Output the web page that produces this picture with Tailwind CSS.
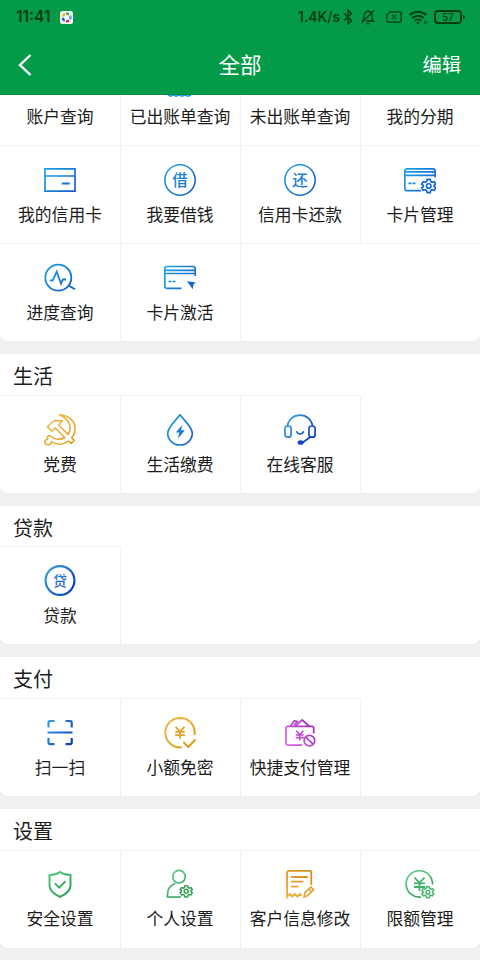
<!DOCTYPE html>
<html lang="zh-CN">
<head>
  <meta charset="UTF-8">
  <meta name="viewport" content="width=device-width, initial-scale=1.0">
  <title>全部</title>
  <script src="https://cdn.jsdelivr.net/npm/@tailwindcss/browser@4"></script>
</head>
<body class="bg-[#f0f0f0] font-['Noto_Sans_CJK_SC',sans-serif] text-[#1c1c1c]">

<!-- Shared gradients and symbols -->
<svg class="absolute w-0 h-0" aria-hidden="true">
  <defs>
    <linearGradient id="blue" gradientUnits="userSpaceOnUse" x1="0" y1="4" x2="32" y2="28"><stop offset="0" stop-color="#1ba6e0"/><stop offset="1" stop-color="#1458cf"/></linearGradient>
    <linearGradient id="deep" gradientUnits="userSpaceOnUse" x1="2" y1="6" x2="30" y2="26"><stop offset="0" stop-color="#35a0e0"/><stop offset="1" stop-color="#0a35bd"/></linearGradient>
    <linearGradient id="gold" gradientUnits="userSpaceOnUse" x1="0" y1="0" x2="24" y2="32"><stop offset="0" stop-color="#f3bd4c"/><stop offset="1" stop-color="#e39a1c"/></linearGradient>
    <linearGradient id="amber" gradientUnits="userSpaceOnUse" x1="2" y1="30" x2="24" y2="2"><stop offset="0" stop-color="#f0b23c"/><stop offset="1" stop-color="#d98a1c"/></linearGradient>
    <linearGradient id="purple" gradientUnits="userSpaceOnUse" x1="2" y1="28" x2="30" y2="6"><stop offset="0" stop-color="#dc6bea"/><stop offset="1" stop-color="#9a27b5"/></linearGradient>
    <linearGradient id="green" gradientUnits="userSpaceOnUse" x1="6" y1="2" x2="24" y2="30"><stop offset="0" stop-color="#5ccb84"/><stop offset="1" stop-color="#229746"/></linearGradient>
    <symbol id="gear" viewBox="-8 -8 16 16" overflow="visible">
      <path d="M-1.6-7h3.2l.6 2.2 1.5.9 2.2-.6 1.6 2.7L5.900-.8v1.6l1.600 1-1.600 2.700-2.200-.6-1.500.9L1.600 7h-3.200l-.6-2.200-1.500-.9-2.200.6-1.600-2.700 1.600-1v-1.600l-1.600-1 1.600-2.700 2.200.6 1.500-.9z"/>
      <circle r="2.400"/>
    </symbol>
    <symbol id="yen" viewBox="-8 -8 16 16" overflow="visible">
      <path d="M-5-6.500 0-1l5-5.500M-5.500-.6h11M-5.500 3h11M0-1v8"/>
    </symbol>
  </defs>
</svg>

<!-- Header -->
<header class="h-[95px] bg-[#039b47] border-b border-[#0b8c42]">
  <div class="h-[34px] pl-4 pr-[15px] flex items-center text-[#083b16] font-['Inter',sans-serif]">
    <span class="w-[37px] text-[15.500px] font-semibold whitespace-nowrap">11:41</span>
    <svg class="w-[13px] h-[13px] ml-[7px]" viewBox="0 0 13 13" fill="none" stroke-width="2.400">
      <rect width="13" height="13" rx="2.500" fill="#f4faf6"/>
      <path d="M2.800 5.500A4 4 0 0 1 5 2.800" stroke="#f0b323"/>
      <path d="M6 2.700A4 4 0 0 1 9 3.500" stroke="#39a854"/>
      <path d="M10 4.500A4 4 0 0 1 10 8.500" stroke="#5aa6e0"/>
      <path d="M9 9.500A4 4 0 0 1 6 10.300" stroke="#d7263d"/>
      <path d="M4.700 9.800A4 4 0 0 1 2.800 6.800" stroke="#2a55c8"/>
    </svg>
    <span class="ml-auto text-[13.800px] font-semibold whitespace-nowrap">1.4K/s</span>
    <svg class="w-[10px] h-4 ml-[3px]" viewBox="0 0 10 16" fill="none" stroke="currentColor" stroke-width="1.400"><path d="M1 4.500 8.500 11.500 5 15V1l3.500 3.500L1 11.500"/></svg>
    <svg class="w-4 h-4 ml-[7px]" viewBox="0 0 16 16" fill="none" stroke="currentColor" stroke-width="1.300"><path d="M4 11V7a4 4 0 0 1 4-4.500c2.500 0 4 2 4 4.500v3l1.500 2H6M8 1v1.500M6.500 14.500h3M1.500 14 14 1.500M3.500 12h-1l1.500-2"/></svg>
    <svg class="w-4 h-3 ml-[10px]" viewBox="0 0 16 12" fill="none" stroke="currentColor" stroke-width="1.300"><path d="M4 .8h9.500a1.600 1.600 0 0 1 1.700 1.600v7.200a1.600 1.600 0 0 1-1.700 1.600h-11A1.600 1.600 0 0 1 .8 9.600V4zM6 3.900l4.200 4.200M10.200 3.900 6 8.100"/></svg>
    <svg class="w-[19px] h-[15px] ml-[7px]" viewBox="0 0 19 15" fill="none" stroke="currentColor" stroke-width="2"><path d="M.8 5a12 12 0 0 1 16.400 0M3.300 8a8.200 8.200 0 0 1 11.400 0M5.800 10.700a4.800 4.800 0 0 1 6.400 0"/><circle cx="9" cy="13" r="1.200" fill="currentColor" stroke="none"/><circle cx="16.500" cy="12.500" r="1.300" stroke-width=".8"/></svg>
    <div class="ml-[6px] w-[28px] h-[14px] rounded-[4px] border-2 border-current flex items-center justify-center text-[10px] font-medium leading-none">57</div>
    <div class="ml-px w-[2px] h-1 rounded-r bg-[#083b16]"></div>
  </div>
  <div class="h-[60px] grid grid-cols-3 items-center text-white">
    <svg class="ml-[18px] mt-px w-[14px] h-[22px]" viewBox="0 0 14 22" fill="none" stroke="currentColor" stroke-width="2.400"><path d="M12.500 1 2 11l10.500 10"/></svg>
    <h1 class="text-center text-[21.500px] leading-none">全部</h1>
    <span class="text-right pt-[2px] pr-[19px] text-[19.300px] leading-none">编辑</span>
  </div>
</header>

<!-- Cells overlap by one pixel so that each divider falls on the column boundary -->
<main class="text-[16.800px] leading-[24px] text-center">

  <!-- Credit card -->
  <section class="bg-white rounded-b-lg overflow-hidden">
    <div class="grid grid-cols-4 h-[50px]">
      <div class="-mr-px border-r border-[#f2f2f2] pt-[9px]">账户查询</div>
      <div class="relative -mr-px border-r border-[#f2f2f2] pt-[9px]">
        <!-- bottom edge of the icon scrolled under the header -->
        <svg class="absolute top-0 left-[48px] w-6 h-[2px]" viewBox="0 0 24 2" fill="none" stroke="#1b9be0" stroke-width="1.500"><path d="M0 0 2.500 1.200 5 0 8 1.200l3-1.200L14 1.200l3-1.200L20 1.200l3-1.200"/></svg>
        已出账单查询
      </div>
      <div class="-mr-px border-r border-[#f2f2f2] pt-[9px]">未出账单查询</div>
      <div class="pt-[9px]">我的分期</div>
    </div>
    <div class="grid grid-cols-4 auto-rows-[98px]">
      <div class="-mr-px border-t border-r border-[#f2f2f2] pt-[18px] flex flex-col items-center gap-[6px]">
        <svg class="w-8 h-8 shrink-0" viewBox="0 0 32 32" fill="none" stroke="url(#blue)" stroke-width="1.700"><path d="M1 4.800h30v22.400H1zM1 12h30"/><path d="M17.700 19.500h8" stroke-width="2"/></svg>
        <span>我的信用卡</span>
      </div>
      <div class="-mr-px border-t border-r border-[#f2f2f2] pt-[18px] flex flex-col items-center gap-[6px]">
        <svg class="w-8 h-8 shrink-0" viewBox="0 0 32 32" fill="none"><circle cx="16" cy="16" r="15.200" stroke="url(#blue)" stroke-width="1.600"/><text x="16" y="21.800" text-anchor="middle" font-size="15.500" font-weight="500" fill="url(#blue)">借</text></svg>
        <span>我要借钱</span>
      </div>
      <div class="-mr-px border-t border-r border-[#f2f2f2] pt-[18px] flex flex-col items-center gap-[6px]">
        <svg class="w-8 h-8 shrink-0" viewBox="0 0 32 32" fill="none"><circle cx="16" cy="16" r="15.200" stroke="url(#blue)" stroke-width="1.600"/><text x="16" y="21.800" text-anchor="middle" font-size="15.500" font-weight="500" fill="url(#blue)">还</text></svg>
        <span>信用卡还款</span>
      </div>
      <div class="border-t border-[#f2f2f2] pt-[18px] flex flex-col items-center gap-[6px]">
        <svg class="w-8 h-8 shrink-0" viewBox="0 0 32 32" fill="none" stroke="url(#blue)" stroke-width="1.700"><path d="M31.200 13.500V7a2.200 2.200 0 0 0-2.200-2.200H3A2.200 2.200 0 0 0 .8 7v17.500A2.200 2.200 0 0 0 3 26.700h14M1 7.800h30M1 11.300h30M4.500 19.300h3M8.500 19.300h3"/><g transform="translate(24.700 22)"><use href="#gear" x="-7.500" y="-7.500" width="15" height="15" stroke="#1769d2" stroke-width="1.800"/></g></svg>
        <span>卡片管理</span>
      </div>
      <div class="-mr-px border-t border-r border-[#f2f2f2] pt-[18px] flex flex-col items-center gap-[6px]">
        <svg class="w-8 h-8 shrink-0" viewBox="0 0 32 32" fill="none" stroke="url(#blue)" stroke-width="1.800"><circle cx="14.300" cy="15.700" r="13"/><path d="M24.500 23.500 31 27.300M5.800 18.300h3l3.900-8.600 4.300 12 1.900-4.200H22"/></svg>
        <span>进度查询</span>
      </div>
      <div class="-mr-px border-t border-r border-[#f2f2f2] pt-[18px] flex flex-col items-center gap-[6px]">
        <svg class="w-8 h-8 shrink-0" viewBox="0 0 32 32" fill="none" stroke="url(#blue)" stroke-width="1.700"><path d="M31.200 14V6.700A2.200 2.200 0 0 0 29 4.500H3A2.200 2.200 0 0 0 .8 6.700v17.500A2.200 2.200 0 0 0 3 26.400h14.500M1 8.300h30M1 11.500h30M4.500 19.500h3M8.500 19.500h3"/><path d="m23 19.300 9 1.200-2.500 1.800-.7 4.900z" fill="#1260d4" stroke="none"/></svg>
        <span>卡片激活</span>
      </div>
      <div class="border-t border-[#f2f2f2] col-span-2"></div>
    </div>
  </section>

  <!-- Life -->
  <section class="mt-[13px] bg-white rounded-b-lg overflow-hidden">
    <h2 class="h-[40.700px] pl-[13px] text-left text-[20px] leading-[43px]">生活</h2>
    <div class="grid grid-cols-4 h-[98px]">
      <div class="-mr-px border-t border-r border-[#f2f2f2] pt-[18px] flex flex-col items-center gap-[6px]">
        <svg class="w-8 h-8 shrink-0" viewBox="0 0 32 32" fill="none" stroke="url(#gold)" stroke-width="1.500" stroke-linejoin="round"><path d="M15.500.8C25 1.500 31 7 31 14.500c0 4-1.300 7-3.300 9.300l2.500 2.700-3 3-2.700-2.500c-5.500 4-12 4-17 .5-.3 2.300-1.500 3.300-3 3.300C2 30.800.8 29.500.8 28S2 25.500 3.800 25.200c-.8-1.200-.6-2.200.2-3l1.800-.7c5 4.300 10.700 4.700 15 2L11.300 14l-3.600 3.300-4.200-4.500L10.300 6.500l8 .3-3.500 4.200 9.200 9.500C28.500 14.500 26 5.500 15.500.8z"/></svg>
        <span>党费</span>
      </div>
      <div class="-mr-px border-t border-r border-[#f2f2f2] pt-[18px] flex flex-col items-center gap-[6px]">
        <svg class="w-8 h-8 shrink-0" viewBox="0 0 32 32" fill="none" stroke="url(#blue)" stroke-width="1.700"><path d="M16 .8C12 6 3.700 13.300 3.700 19.300a12.300 11.700 0 0 0 24.600 0C28.300 13.300 20 6 16 .8z"/><path d="m18.300 10.800-6.600 7.800h3.600l-1.200 5.900 6.700-8.300h-3.700z" fill="url(#blue)" stroke="none"/></svg>
        <span>生活缴费</span>
      </div>
      <div class="-mr-px border-t border-r border-[#f2f2f2] pt-[18px] flex flex-col items-center gap-[6px]">
        <svg class="w-8 h-8 shrink-0" viewBox="0 0 32 32" fill="none" stroke="url(#deep)" stroke-width="1.700" stroke-linecap="round"><path d="M3.300 12C4.500 5.300 9.500 1.200 16 1.200S27.500 5.300 28.700 12"/><rect x=".9" y="12" width="6.200" height="11.200" rx="2.800"/><rect x="24.900" y="12" width="6.200" height="11.200" rx="2.800"/><path d="M12.800 17.800c1.300 3 5.300 3 6.600 0M26 23.200l-7 5"/><ellipse cx="16.700" cy="28.500" rx="2.200" ry="1.500" fill="#1747c6" stroke="#1747c6"/></svg>
        <span>在线客服</span>
      </div>
    </div>
  </section>

  <!-- Loans -->
  <section class="mt-[13px] bg-white rounded-b-lg overflow-hidden">
    <h2 class="h-[40.700px] pl-[13px] text-left text-[20px] leading-[43px]">贷款</h2>
    <div class="grid grid-cols-4 h-[98px]">
      <div class="-mr-px border-t border-r border-[#f2f2f2] pt-[18px] flex flex-col items-center gap-[6px]">
        <svg class="w-8 h-8 shrink-0" viewBox="0 0 32 32" fill="none"><circle cx="16" cy="15.500" r="14.400" stroke="url(#deep)" stroke-width="2.200"/><text x="16" y="20.800" text-anchor="middle" font-size="14" font-weight="500" fill="url(#deep)">贷</text></svg>
        <span>贷款</span>
      </div>
    </div>
  </section>

  <!-- Payments -->
  <section class="mt-[13px] bg-white rounded-b-lg overflow-hidden">
    <h2 class="h-[40.700px] pl-[13px] text-left text-[20px] leading-[43px]">支付</h2>
    <div class="grid grid-cols-4 h-[98px]">
      <div class="-mr-px border-t border-r border-[#f2f2f2] pt-[18px] flex flex-col items-center gap-[6px]">
        <svg class="w-8 h-8 shrink-0" viewBox="0 0 32 32" fill="none" stroke="url(#deep)" stroke-width="2.200"><path d="M4.500 10.500V5.500a1.500 1.500 0 0 1 1.500-1.500h4.500M21.500 4h4.700a1.500 1.500 0 0 1 1.500 1.500v5M27.700 21v4.700a1.500 1.500 0 0 1-1.500 1.500h-4.700M10.500 27.200H6a1.500 1.500 0 0 1-1.500-1.500V21M3.500 15.500h25"/></svg>
        <span>扫一扫</span>
      </div>
      <div class="-mr-px border-t border-r border-[#f2f2f2] pt-[18px] flex flex-col items-center gap-[6px]">
        <svg class="w-8 h-8 shrink-0" viewBox="0 0 32 32" fill="none" stroke="url(#gold)" stroke-width="2"><path d="M17.700 30.200A14.700 14.700 0 1 1 30.500 18M19.300 25l5 5 7.200-7.500"/><use href="#yen" x="9" y="8.500" width="14" height="14" stroke="#e5a02c"/></svg>
        <span>小额免密</span>
      </div>
      <div class="-mr-px border-t border-r border-[#f2f2f2] pt-[18px] flex flex-col items-center gap-[6px]">
        <svg class="w-8 h-8 shrink-0" viewBox="0 0 32 32" fill="none" stroke="url(#purple)" stroke-width="1.700"><path d="M29.700 16.500V11A1.800 1.800 0 0 0 28 9.300H3.700A1.800 1.800 0 0 0 2 11v15.500a1.800 1.800 0 0 0 1.700 1.700H18M6.500 9l3.800-5.300 3.700 1M11.500 9l6.700-6.200L25 9M10 8l4-4"/><circle cx="25.400" cy="23.700" r="5.300"/><path d="m21.800 20.200 7.200 7"/><use href="#yen" x="10" y="12.700" width="11.500" height="11.500" stroke="#c04ad2" stroke-width="2.200"/></svg>
        <span>快捷支付管理</span>
      </div>
    </div>
  </section>

  <!-- Settings -->
  <section class="mt-[13px] bg-white rounded-b-lg overflow-hidden">
    <h2 class="h-[40.700px] pl-[13px] text-left text-[20px] leading-[43px]">设置</h2>
    <div class="grid grid-cols-4 h-[98px]">
      <div class="-mr-px border-t border-r border-[#f2f2f2] pt-[18px] flex flex-col items-center gap-[5px]">
        <svg class="w-8 h-8 shrink-0" viewBox="0 0 32 32" fill="none" stroke="url(#green)" stroke-width="2"><path d="M16 3c3.200 2.200 6.500 3 10.500 3v10.500c0 5-4.500 8.700-10.500 11.300C10 25.200 5.500 21.500 5.500 16.500V6C9.500 6 12.800 5.200 16 3zM10.800 14.300l4.400 4.300 6.400-6.500"/></svg>
        <span>安全设置</span>
      </div>
      <div class="-mr-px border-t border-r border-[#f2f2f2] pt-[18px] flex flex-col items-center gap-[5px]">
        <svg class="w-8 h-8 shrink-0" viewBox="0 0 32 32" fill="none" stroke="url(#green)" stroke-width="1.700"><circle cx="15" cy="7.700" r="6.300"/><path d="M11.500 14.500C6.500 16 3.500 20 3.500 25.500V28H17"/><g transform="translate(22.200 22.300)"><use href="#gear" x="-6.500" y="-6.500" width="13" height="13" stroke="#2a9f4e" stroke-width="1.800"/></g></svg>
        <span>个人设置</span>
      </div>
      <div class="-mr-px border-t border-r border-[#f2f2f2] pt-[18px] flex flex-col items-center gap-[5px]">
        <svg class="w-8 h-8 shrink-0" viewBox="0 0 32 32" fill="none" stroke="url(#amber)" stroke-width="1.800"><path d="M27.300 16V3.700A1.900 1.900 0 0 0 25.400 1.800H5a1.900 1.900 0 0 0-1.900 1.900V28l2.600-3 2.500 2.500 2.600-2.500 2.500 2.500L16 25l1.500 1.800M7 8h16.700M7 12.700h12.300M7 17.700h7.500"/><path d="m20 28 1-4.500 6-5.500 2.600 2.800-6 5.700zM25 20l2.600 2.700" stroke-width="1.500"/></svg>
        <span>客户信息修改</span>
      </div>
      <div class="border-t border-[#f2f2f2] pt-[18px] flex flex-col items-center gap-[5px]">
        <svg class="w-8 h-8 shrink-0" viewBox="0 0 32 32" fill="none" stroke="url(#green)" stroke-width="1.600"><path d="M17 28A13.200 13.200 0 1 1 28.500 15.500"/><use href="#yen" x="7.500" y="7" width="16" height="16" stroke="#3fb268" stroke-width="1.800"/><g transform="translate(23.800 23.300)"><use href="#gear" x="-6.300" y="-6.300" width="12.600" height="12.600" stroke="#3fb268" stroke-width="1.800"/></g></svg>
        <span>限额管理</span>
      </div>
    </div>
  </section>
</main>
</body>
</html>
